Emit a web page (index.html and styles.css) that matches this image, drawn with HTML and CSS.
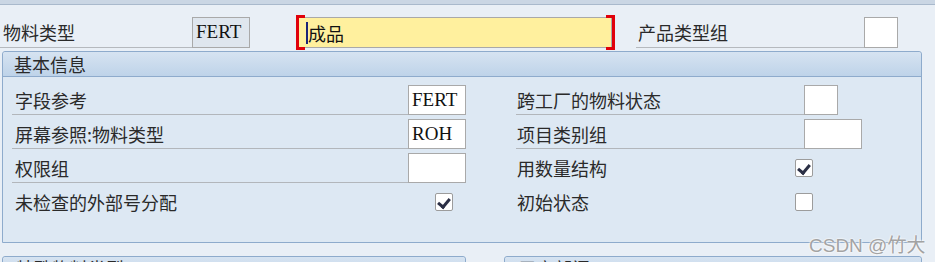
FILE: index.html
```html
<!DOCTYPE html>
<html lang="zh-CN">
<head>
  <meta charset="UTF-8">
  <title>物料类型</title>
  <link rel="stylesheet" href="styles.css">
</head>
<body>
  <div class="topbar"></div>

  <div class="head">
    <div class="lbl head-lbl">物料类型</div>
    <div class="fld ro w58">FERT</div>
    <div class="focus">
      <div class="fld yellow"><span class="caret"></span>成品</div>
      <span class="br br-l"></span>
      <span class="br br-r"></span>
    </div>
    <div class="lbl head-lbl2">产品类型组</div>
    <div class="fld w34"></div>
  </div>

  <div class="group">
    <div class="group-title">基本信息</div>
    <div class="group-body">
      <div class="col col-left">
        <div class="row"><div class="lbl line">字段参考</div><div class="fld w58">FERT</div></div>
        <div class="row"><div class="lbl line">屏幕参照:物料类型</div><div class="fld w58">ROH</div></div>
        <div class="row"><div class="lbl line">权限组</div><div class="fld w58"></div></div>
        <div class="row"><div class="lbl chk-lbl-l">未检查的外部号分配</div><span class="chk on"></span></div>
      </div>
      <div class="col col-right">
        <div class="row"><div class="lbl line">跨工厂的物料状态</div><div class="fld w34"></div></div>
        <div class="row"><div class="lbl line">项目类别组</div><div class="fld w58"></div></div>
        <div class="row"><div class="lbl chk-lbl-r">用数量结构</div><span class="chk on"></span></div>
        <div class="row"><div class="lbl chk-lbl-r">初始状态</div><span class="chk"></span></div>
      </div>
    </div>
  </div>

  <div class="lower">
    <div class="group small left"><div class="group-title">特殊物料类型</div></div>
    <div class="group small right"><div class="group-title">用户部门</div></div>
  </div>

  <div class="mark">CSDN @竹大</div>
</body>
</html>
```

FILE: styles.css
```css
body { margin: 0; height: 262px; overflow: hidden; background: #e9eff6; font-family: "Noto Sans CJK SC", sans-serif; font-size: 18px; color: #2a2a2a; position: relative; }
.topbar { height: 4px; background: #cad6e4; border-bottom: 1px solid #a9b9cc; }

.lbl { height: 30px; line-height: 30px; white-space: nowrap; box-sizing: border-box; }
.fld { height: 30px; box-sizing: border-box; border: 1px solid #a9a9a9; background: #fff; font-family: "Liberation Serif", serif; font-size: 19px; line-height: 28px; padding-left: 3px; color: #111; }
.w58 { width: 58px; }
.w34 { width: 34px; }
.ro { background: #dfe6ee; }

.head { display: flex; margin-top: 12px; height: 31px; }
.head-lbl { width: 192px; padding-left: 3px; border-bottom: 1px solid #b5b9be; height: 31px; }
.head .fld { height: 31px; }
.focus { position: relative; margin-left: 48px; width: 314px; }
.yellow { width: 314px; background: #fff09e; font-family: "Noto Sans CJK SC", sans-serif; font-size: 18px; padding-left: 7px; display: flex; align-items: center; }
.caret { width: 2px; height: 22px; background: #1b2478; }
.br { position: absolute; top: -2px; width: 6px; height: 31px; border: 3px solid #e0000a; box-sizing: content-box; height: 29px; }
.br-l { left: -2px; border-right: none; }
.br-r { right: -3px; border-left: none; }
.head-lbl2 { margin-left: 24px; width: 228px; padding-left: 2px; border-bottom: 1px solid #b5b9be; height: 31px; }

.group { margin: 3px 0 0 2px; width: 920px; border: 1px solid #8eabcc; border-radius: 3px 3px 0 0; background: #dde8f3; box-sizing: border-box; }
.group-title { height: 25px; line-height: 24px; padding-left: 11px; background: linear-gradient(#d6e3f1, #bed3e9); border-bottom: 1px solid #8eabcc; box-sizing: border-box; border-radius: 3px 3px 0 0; }
.group-body { display: flex; padding: 8px 0 25px 9px; }
.col { display: flex; flex-direction: column; gap: 4px; }
.col-left { width: 454px; }
.col-right { margin-left: 50px; }
.row { display: flex; align-items: center; height: 30px; }
.line { flex: 1; padding-left: 3px; border-bottom: 1px solid #b2b6bb; }
.col-right .line { flex: none; width: 288px; padding-left: 1px; }
.chk-lbl-l { width: 423px; padding-left: 3px; }
.chk-lbl-r { width: 279px; padding-left: 1px; }

.chk { width: 18px; height: 18px; box-sizing: border-box; border: 1px solid #9c9c9c; border-radius: 2px; background: #fff; position: relative; }
.chk.on::after { content: ""; position: absolute; left: 4px; top: 2px; width: 5px; height: 9px; border-right: 3px solid #2b2f45; border-bottom: 3px solid #2b2f45; transform: rotate(40deg); }

.lower { display: flex; margin-top: 13px; }
.group.small { margin-top: 0; height: 7px; overflow: hidden; }
.group.small .group-title { line-height: 22px; padding-left: 13px; }
.left { width: 464px; }
.right { width: 418px; margin-left: 38px; }

.mark { position: absolute; left: 809px; top: 230px; font-family: "Liberation Sans", "Noto Sans CJK SC", sans-serif; font-size: 19px; color: #a3a3a3; text-shadow: 0 0 2px #fff, 0 0 2px #fff; }
```
